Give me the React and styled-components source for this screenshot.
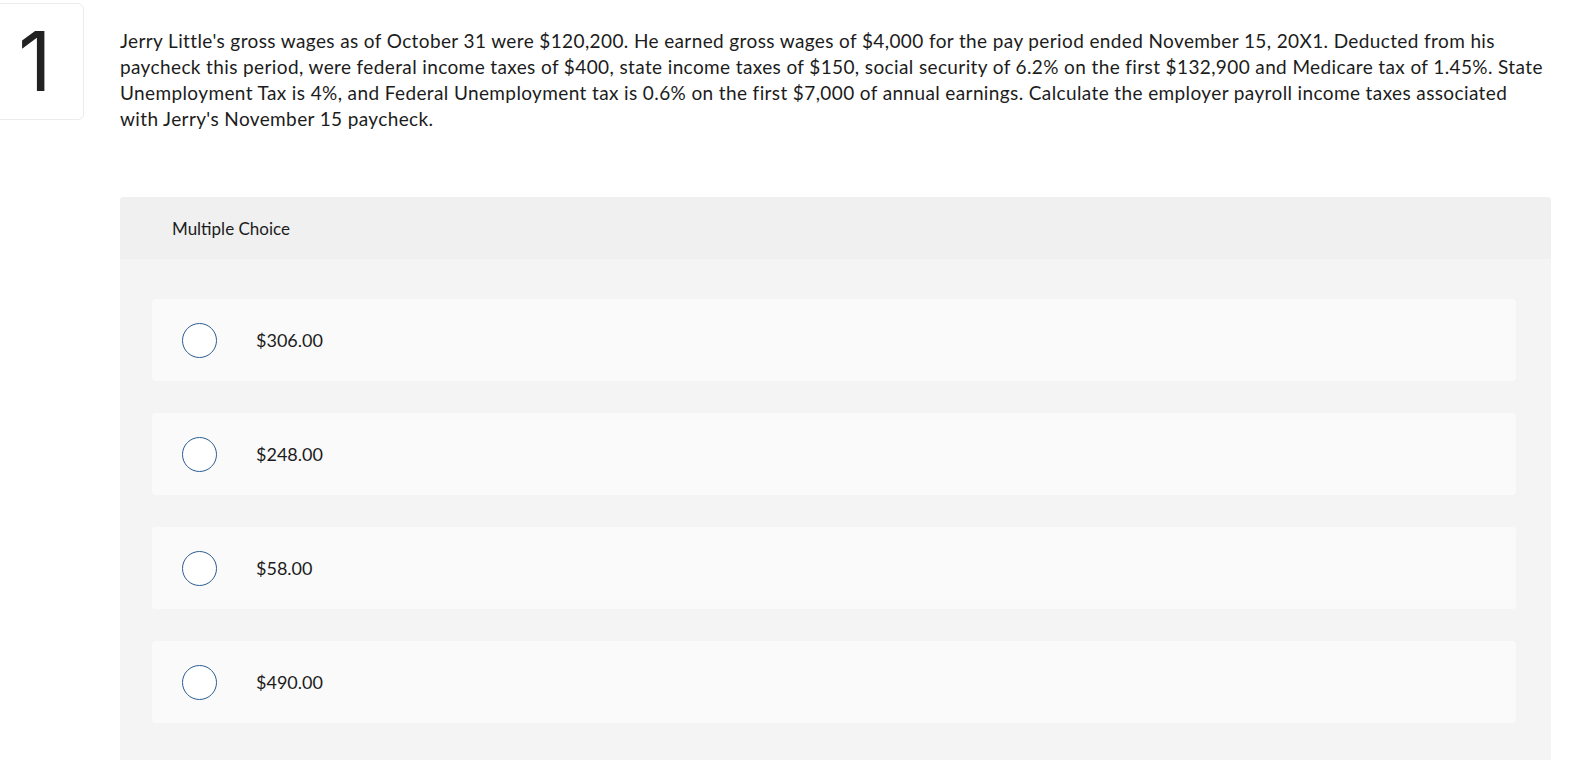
import React from "react";
import styled, { createGlobalStyle } from "styled-components";

const GlobalStyle = createGlobalStyle`
  body {
    margin: 0;
    background: #ffffff;
    font-family: "Lato", "Liberation Sans", sans-serif;
    color: #1c1c1c;
  }
`;

const Page = styled.div`
  display: flex;
  align-items: flex-start;
  gap: 36px;
  padding: 3px 21px 4px 0;
  overflow: hidden;
`;

const NumberBox = styled.div`
  flex: none;
  width: 98px;
  height: 117px;
  margin-left: -14px;
  box-sizing: border-box;
  border: 1px solid #ececec;
  border-radius: 6px;
  display: flex;
  align-items: center;
  justify-content: center;
  font-family: "Inter", "Open Sans", sans-serif;
  font-size: 82px;
  font-weight: 400;
  color: #222;
  line-height: 1;
`;

const Main = styled.div`
  flex: 1;
  min-width: 0;
`;

const Question = styled.p`
  margin: 25px 0 0;
  padding-right: 4px;
  font-size: 19px;
  line-height: 26px;
  letter-spacing: 0.38px;
  color: #1c1c1c;
`;

const Card = styled.section`
  margin-top: 65px;
  background: #f4f4f4;
  border-radius: 4px 4px 0 0;
`;

const CardHeader = styled.div`
  height: 62px;
  display: flex;
  align-items: center;
  padding-left: 52px;
  background: #f0f0f0;
  border-radius: 4px 4px 0 0;
  font-size: 17px;
  color: #1c1c1c;
`;

const Options = styled.div`
  display: flex;
  flex-direction: column;
  gap: 32px;
  padding: 40px 35px 37px 32px;
`;

const Option = styled.label`
  display: flex;
  align-items: center;
  height: 82px;
  padding-left: 30px;
  background: #fafafa;
  border-radius: 4px;
  font-size: 18px;
  color: #1c1c1c;
  cursor: pointer;
`;

const Radio = styled.span`
  flex: none;
  width: 35px;
  height: 35px;
  box-sizing: border-box;
  border-radius: 50%;
  border: 1.5px solid #2c5d8f;
  background: #ffffff;
  margin-right: 39px;
`;

const choices = ["$306.00", "$248.00", "$58.00", "$490.00"];

export default function App() {
  return (
    <>
      <GlobalStyle />
      <Page>
        <NumberBox>1</NumberBox>
        <Main>
          <Question>
            Jerry Little's gross wages as of October 31 were $120,200. He earned
            gross wages of $4,000 for the pay period ended November 15, 20X1.
            Deducted from his paycheck this period, were federal income taxes of
            $400, state income taxes of $150, social security of 6.2% on the
            first $132,900 and Medicare tax of 1.45%. State Unemployment Tax is
            4%, and Federal Unemployment tax is 0.6% on the first $7,000 of
            annual earnings. Calculate the employer payroll income taxes
            associated with Jerry's November 15 paycheck.
          </Question>
          <Card>
            <CardHeader>Multiple Choice</CardHeader>
            <Options>
              {choices.map((c) => (
                <Option key={c}>
                  <Radio />
                  {c}
                </Option>
              ))}
            </Options>
          </Card>
        </Main>
      </Page>
    </>
  );
}
